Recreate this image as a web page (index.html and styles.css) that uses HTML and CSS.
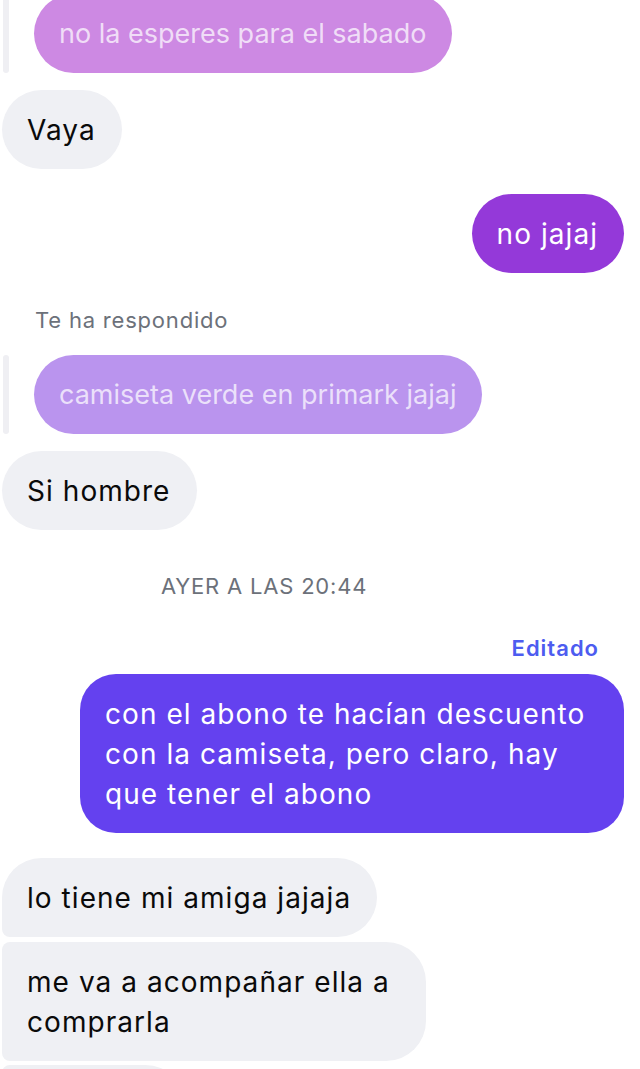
FILE: index.html
```html
<!DOCTYPE html>
<html lang="es">
<head>
  <meta charset="UTF-8" />
  <title>Chat</title>
  <meta name="viewport" content="width=device-width, initial-scale=1.0" />
  <link rel="stylesheet" href="styles.css">
</head>
<body>

  <div class="thread">

    <div class="row reply first">
      <span class="reply-bar"></span>
      <div class="bubble quoted pink">no la esperes para el sabado</div>
    </div>

    <div class="row in gap-s">
      <div class="bubble gray">Vaya</div>
    </div>

    <div class="row out gap-l">
      <div class="bubble violet">no jajaj</div>
    </div>

    <p class="reply-label">Te ha respondido</p>

    <div class="row reply">
      <span class="reply-bar"></span>
      <div class="bubble quoted lilac">camiseta verde en primark jajaj</div>
    </div>

    <div class="row in gap-s">
      <div class="bubble gray">Si hombre</div>
    </div>

    <p class="timestamp">AYER A LAS 20:44</p>

    <p class="edited">Editado</p>

    <div class="row out">
      <div class="bubble indigo">con el abono te hacían descuento con la camiseta, pero claro, hay que tener el abono</div>
    </div>

    <div class="row in gap-l">
      <div class="bubble gray group-top">lo tiene mi amiga jajaja</div>
    </div>
    <div class="row in gap-xs">
      <div class="bubble gray group-mid">me va a acompañar ella a comprarla</div>
    </div>
    <div class="row in gap-xxs">
      <div class="bubble gray group-mid stub"></div>
    </div>

  </div>

</body>
</html>
```

FILE: styles.css
```css
:root {
  --gray-bubble: #eff0f4;
  --muted: #6c717a;
  --text: #0a0a0a;
}

* {
  box-sizing: border-box;
}

html, body {
  height: 100%;
}

body {
  margin: 0;
  background: #ffffff;
  font-family: Inter, "Noto Sans", sans-serif;
  color: var(--text);
  overflow: hidden;
}

.thread {
  display: flex;
  flex-direction: column;
  height: 100%;
  overflow: hidden;
  padding: 0 16px 0 2px;
}

.row {
  display: flex;
  flex-shrink: 0;
}

.row.in {
  justify-content: flex-start;
}

.row.out {
  justify-content: flex-end;
}

.row.first {
  margin-top: -6px;
}

.gap-xxs { margin-top: 4px; }
.gap-xs { margin-top: 5px; }
.gap-s { margin-top: 17px; }
.gap-l { margin-top: 25px; }

.bubble {
  font-size: 28px;
  letter-spacing: 1.05px;
  line-height: 40px;
  padding: 20px 26px 19px 25px;
  border-radius: 40px;
  max-width: 544px;
}

.bubble.gray {
  background: var(--gray-bubble);
  color: var(--text);
  max-width: 424px;
}

.bubble.violet {
  background: #9439d9;
  color: #ffffff;
}

.bubble.indigo {
  background: #6441ef;
  color: #ffffff;
  border-radius: 36px;
}

.bubble.group-top {
  border-radius: 40px 40px 40px 8px;
}

.bubble.group-mid {
  border-radius: 8px 40px 40px 8px;
}

.bubble.stub {
  width: 183px;
  height: 79px;
}

/* quoted message in a reply */
.row.reply {
  padding-left: 1px;
  gap: 25px;
  align-items: stretch;
}

.reply-bar {
  width: 6px;
  border-radius: 3px;
  background: #efeff3;
}

.bubble.quoted {
  font-size: 27px;
  letter-spacing: 0;
  color: rgba(255, 255, 255, 0.72);
}

.bubble.pink {
  background: #cd89e3;
}

.bubble.lilac {
  background: #ba94ee;
}

.reply-label {
  flex-shrink: 0;
  margin: 34px 0 0 33px;
  font-size: 22px;
  letter-spacing: 0.8px;
  line-height: 26px;
  color: var(--muted);
}

.reply-label + .row {
  margin-top: 22px;
}

.timestamp {
  flex-shrink: 0;
  margin: 43px 0 0 159px;
  font-size: 22px;
  letter-spacing: 0.8px;
  line-height: 26px;
  color: var(--muted);
}

.edited {
  flex-shrink: 0;
  margin: 36px 0 0 0;
  text-align: right;
  padding-right: 25px;
  font-size: 22px;
  font-weight: 600;
  letter-spacing: 1px;
  line-height: 26px;
  color: #4d5cf0;
}

.edited + .row {
  margin-top: 13px;
}
```
